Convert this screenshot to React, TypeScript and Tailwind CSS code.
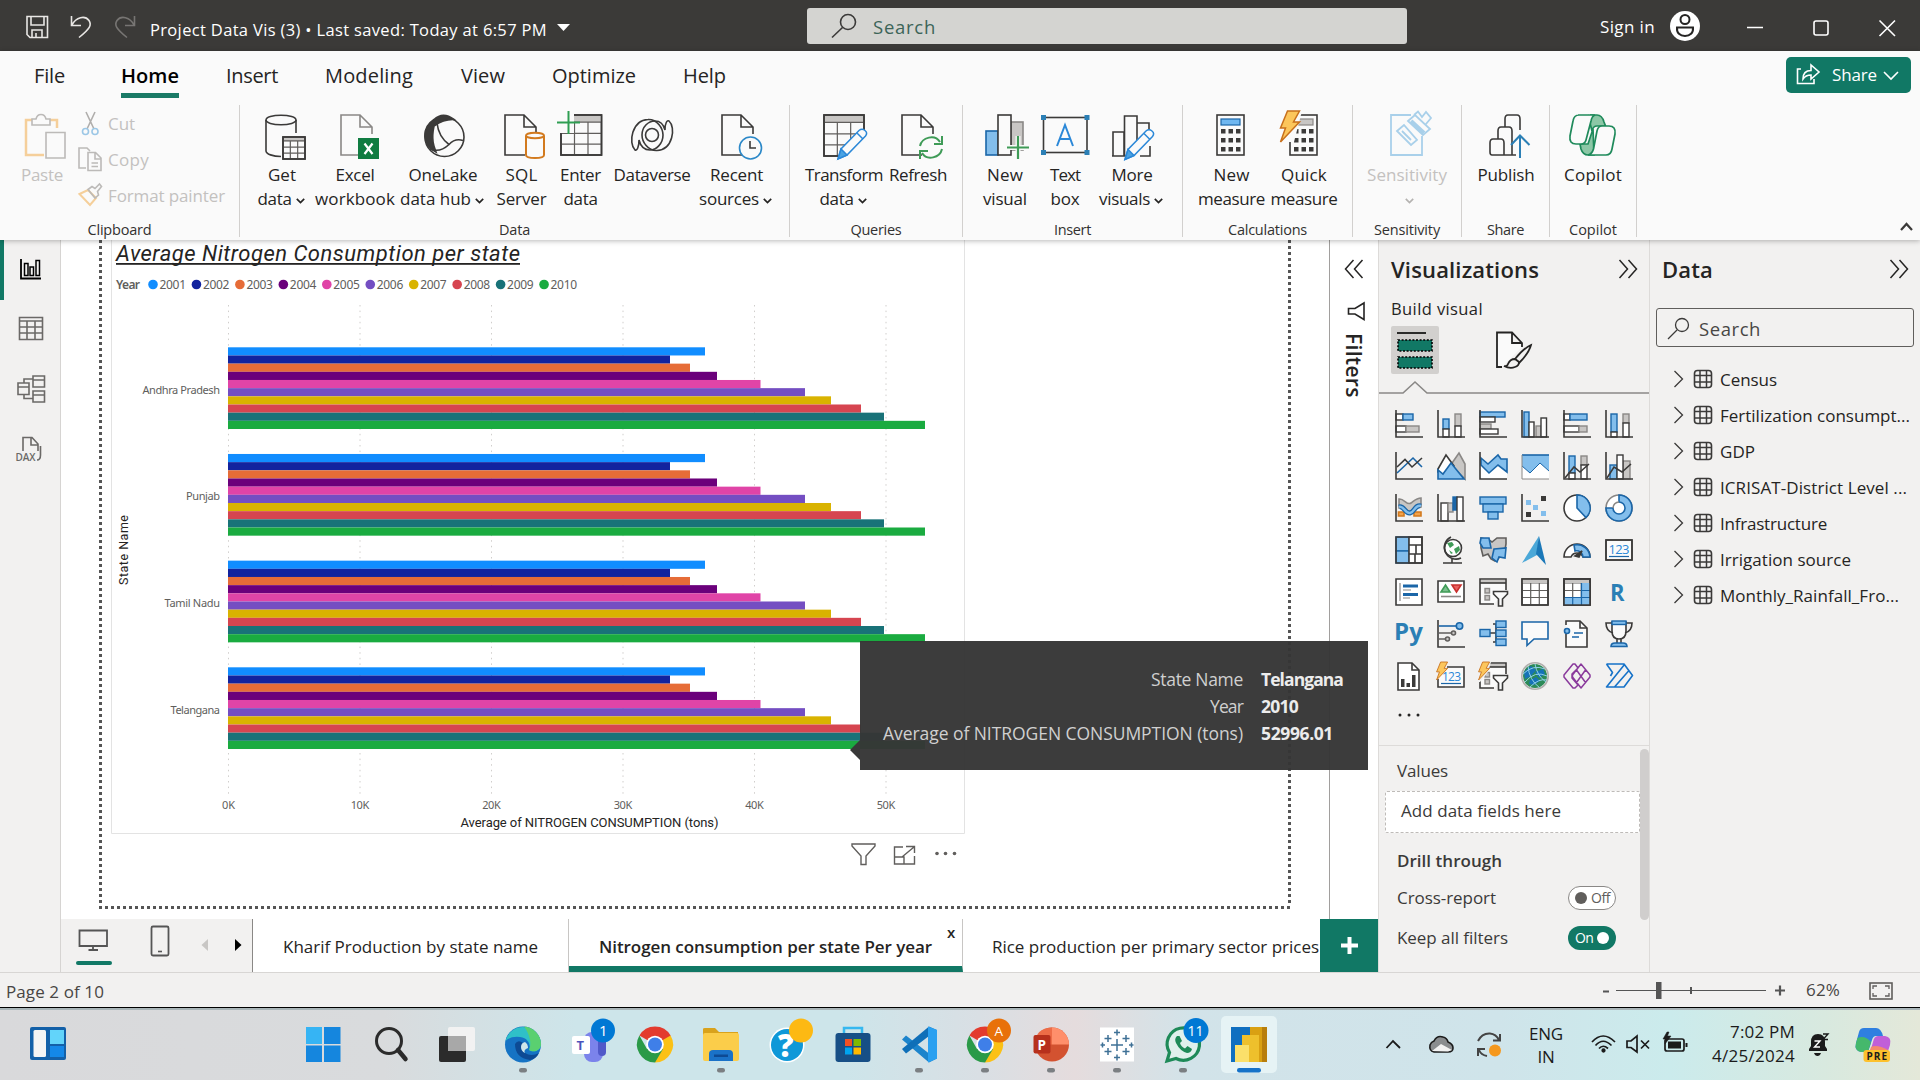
import React, { useLayoutEffect, useRef, useState } from "react";

/* Text set to a known width: the letter spacing is worked out after measuring. */
function Fit({ w, className = "", children }: { w: number; className?: string; children: string }) {
  const ref = useRef<HTMLSpanElement>(null);
  const [ls, setLs] = useState(0);
  useLayoutEffect(() => {
    if (ref.current) setLs((w - ref.current.getBoundingClientRect().width) / children.length);
  }, []);
  return (
    <span ref={ref} className={"inline-block shrink-0 whitespace-pre " + className} style={{ letterSpacing: ls }}>
      {children}
    </span>
  );
}

/* Icon whose view box is given as x, y, width, height. */
function Ic({ b, className = "", children }: { b: [number, number, number, number]; className?: string; children: React.ReactNode }) {
  return (
    <svg width={b[2]} height={b[3]} viewBox={b.join(" ")} fill="none" stroke="#3b3a39" strokeWidth="1.6" className={"block shrink-0 " + className}>
      {children}
    </svg>
  );
}

const Chev = ({ c = "#252423" }: { c?: string }) => (
  <svg width="9" height="6" viewBox="0 0 9 6" fill="none" stroke={c} strokeWidth="1.7" className="ml-[4px] mt-[3px] shrink-0">
    <path d="M.8 .8 4.5 4.5 8.2 .8" />
  </svg>
);

type Line = [string, number, boolean?];
function RBtn({ x, w, lines, off, children }: { x: number; w: number; lines: Line[]; off?: boolean; children: React.ReactNode }) {
  return (
    <div className={off ? "flex shrink-0 flex-col items-center text-[#c3c1bf]" : "flex shrink-0 flex-col items-center text-[#252423]"}>
      <Ic b={[x, 108, w, 55]}>{children}</Ic>
      {lines.map(([t, lw, ch], i) => (
        <div key={i} className={ch && t ? "flex h-6 items-center pr-[2px] text-[17px] leading-6" : "flex h-6 items-center text-[17px] leading-6"}>
          {t && <Fit w={lw}>{t}</Fit>}
          {ch && <Chev c={off ? "#b5b3b1" : undefined} />}
        </div>
      ))}
    </div>
  );
}

function Group({ className, label, lw, children }: { className: string; label: string; lw: number; children: React.ReactNode }) {
  return (
    <div className={"relative flex shrink-0 flex-col " + className}>
      <div className="flex h-[112px]">{children}</div>
      <div className="flex justify-center text-[14.5px] leading-5 text-[#323130]">
        <Fit w={lw}>{label}</Fit>
      </div>
    </div>
  );
}
const Sep = () => <div className="mt-[5px] h-[132px] w-px shrink-0 bg-[#d2d0ce]" />;

const Doc = ({ x, c = "#3b3a39" }: { x: number; c?: string }) => (
  <path d={`M${x + 20} 155H${x}V115H${x + 19}L${x + 31} 127V134M${x + 19} 115V127H${x + 31}`} stroke={c} />
);
const Grid = ({ x, y, w, h }: { x: number; y: number; w: number; h: number }) => (
  <g>
    <rect x={x} y={y} width={w} height={h} fill="#fafafa" />
    <rect x={x + 1} y={y + 1} width={w - 2} height={h * 0.15} fill="#c8c6c4" stroke="none" />
    <path strokeWidth="1.2" stroke="#605e5c" d={`M${x} ${y + h * 0.18}h${w}M${x} ${y + h * 0.46}h${w}M${x} ${y + h * 0.73}h${w}M${x + w / 3} ${y + h * 0.18}v${h * 0.82}M${x + (2 * w) / 3} ${y + h * 0.18}v${h * 0.82}`} />
    <rect x={x} y={y} width={w} height={h} />
  </g>
);
const Pencil = ({ x, y }: { x: number; y: number }) => (
  <g transform={`translate(${x} ${y})`} stroke="#2b88d8" strokeWidth="1.5">
    <path d="M0 30 3 20 21 1.500Q24-1 27 1.500Q30 4 27.500 7L9 26Z" fill="#fafafa" />
    <path d="M0 30 3 20 9 26Z" fill="#4ba3e3" />
    <path d="M19 4 25 10" />
  </g>
);
const Bolt = ({ x, y, s = 1 }: { x: number; y: number; s?: number }) => (
  <path transform={`translate(${x} ${y}) scale(${s})`} d="M8 0H20L14 11H20L1 31 6 17H1Z" fill="#fcc65c" stroke="#c8701c" strokeWidth="1.5" />
);
const Calc = ({ x, top }: { x: number; top: string }) => (
  <g>
    <rect x={x} y="115" width="27" height="40" />
    <rect x={x + 4} y="119" width="19" height="6" fill={top} stroke={top === "#c8c6c4" ? "#8a8886" : "#1b66a8"} strokeWidth="1.2" />
    {[129, 138, 147].map((y) => [4, 11.5, 19].map((d) => <rect key={y + "-" + d} x={x + d} y={y} width="4.500" height="4.500" fill="#3b3a39" stroke="none" />))}
  </g>
);

function TitleBar() {
  return (
    <div className="flex h-[51px] bg-[#3b3a38] text-white">
      <Ic b={[0, 0, 150, 51]} className="">
        <g stroke="#e8e6e4" strokeWidth="1.6">
          <path d="M27 16.500H47.500V37.500H30L27 34.500Z" />
          <path d="M31 17V25H44V17M32 37V30H42V37M36 37V33" />
          <path d="M71.500 16V25.500H81M72 25C76 17 85 15 89 20.500C92 25 90 28.500 79 37.500" />
          <path d="M134.500 16V25.500H125M134 25C130 17 121 15 117 20.500C114 25 116 28.500 127 37.500" stroke="#777573" />
        </g>
      </Ic>
      <Fit w={397} className="mt-[18px] text-[16.500px] leading-6">Project Data Vis (3) • Last saved: Today at 6:57 PM</Fit>
      <Ic b={[550, 0, 30, 51]} className="ml-[3px]">
        <path d="M557 24H570L563.500 31Z" fill="#fff" stroke="none" />
      </Ic>
      <div className="ml-[227px] mt-2 flex h-9 w-[600px] rounded-[3px] bg-[#d4d4d1]">
        <Ic b={[807, 8, 66, 36]}>
          <circle cx="848" cy="22" r="7.500" />
          <path d="M842.500 27.500 832 37.500" />
        </Ic>
        <Fit w={63} className="mt-[7px] text-[18.500px] leading-6 text-[#3c6458]">Search</Fit>
      </div>
      <Fit w={55} className="ml-[193px] mt-[15px] text-[17px] leading-6">Sign in</Fit>
      <Ic b={[1655, 0, 265, 51]}>
        <circle cx="1685" cy="26" r="15" fill="#fff" stroke="none" />
        <g stroke="#252423" strokeWidth="2">
          <circle cx="1685" cy="19.500" r="4.500" />
          <path d="M1677 27.500H1693C1693.500 33 1690 36 1685 36S1676.500 33 1677 27.500Z" />
        </g>
        <g stroke="#fff" strokeWidth="1.6">
          <path d="M1747 27.500H1763M1879.500 20.500 1895 36M1895 20.500 1879.500 36" />
          <rect x="1814" y="21" width="14" height="14" rx="2" />
        </g>
      </Ic>
    </div>
  );
}

function RibbonTabs() {
  const tabs: [string, number, string][] = [
    ["File", 31, "ml-[34px]"],
    ["Home", 58, "ml-[56px]"],
    ["Insert", 52, "ml-[47px]"],
    ["Modeling", 88, "ml-[47px]"],
    ["View", 44, "ml-[48px]"],
    ["Optimize", 84, "ml-[47px]"],
    ["Help", 43, "ml-[47px]"],
  ];
  return (
    <div className="flex h-[49px] items-start">
      {tabs.map(([t, w, m]) => (
        <div key={t} className={"flex shrink-0 flex-col text-[20px] leading-[25px] " + m}>
          <Fit w={w} className={t === "Home" ? "mt-[12px] font-semibold text-black" : "mt-[12px] text-[#252423]"}>{t}</Fit>
          {t === "Home" && <div className="mt-[5px] h-[5px] bg-[#1a7a66]" />}
        </div>
      ))}
      <div className="ml-auto mr-[9px] mt-[6px] flex h-9 w-[125px] rounded-[5px] bg-[#117865] text-white">
        <Ic b={[1786, 57, 46, 36]}>
          <g stroke="#fff">
            <path d="M1801 69H1797.500V83.500H1814V79" />
            <path d="M1803 79C1803 72.500 1806 70.500 1811 70.500V65L1819 72 1811 79V75C1807 75 1805 76 1803 79Z" />
          </g>
        </Ic>
        <Fit w={45} className="mt-[6px] text-[17px] leading-6">Share</Fit>
        <Ic b={[1877, 57, 30, 36]}>
          <path d="M1884 72 1891 79 1898 72" stroke="#fff" />
        </Ic>
      </div>
    </div>
  );
}

function Ribbon() {
  return (
    <div className="flex h-[140px]">
      <div className="flex w-[239px] shrink-0 flex-col">
        <div className="flex h-[120px]">
          <div className="ml-[18px] flex w-[50px] flex-col items-center pt-2">
            <Ic b={[18, 108, 50, 55]}>
              <path d="M33 120H26V155H44M49 120H57V128" stroke="#f5cf9a" strokeWidth="2.500" />
              <path d="M32 125V119H36Q37 114.500 41 114.500T46 119H50V125Z M46 132.500H65V158H46Z" fill="#fafafa" stroke="#bcbab8" />
            </Ic>
            <Fit w={42} className="mr-[2px] text-[17px] leading-6 text-[#c3c1bf]">Paste</Fit>
          </div>
          <div className="flex flex-col text-[17px] leading-6 text-[#c3c1bf]">
            <div className="flex h-9 items-center pt-[12px]">
              <Ic b={[68, 107, 40, 34]}>
                <path d="M86 112 94 129M95 112 87 129" stroke="#b0aeac" />
                <circle cx="85.500" cy="131.500" r="3" stroke="#9cc7e6" />
                <circle cx="95" cy="131.500" r="3" stroke="#9cc7e6" />
              </Ic>
              <Fit w={27}>Cut</Fit>
            </div>
            <div className="flex h-9 items-center pt-[12px]">
              <Ic b={[68, 143, 40, 34]}>
                <path d="M86 168H79V148H87L90 151M88 152.500H95.500L101 158V170.500H88Z M95 153V159H101M91.500 163H98M91.500 166.500H98" stroke="#bcbab8" />
              </Ic>
              <Fit w={41}>Copy</Fit>
            </div>
            <div className="flex h-9 items-center pt-[12px]">
              <Ic b={[68, 179, 40, 34]}>
                <path d="M79.500 194 88 190 96 198 90 205Z" stroke="#f5cf9a" strokeWidth="2" />
                <path d="M88 189.500 92 186.500 95 188.500 99.500 184 101.500 186.500 97.500 191.500 98.500 195 95 198Z" stroke="#bcbab8" />
              </Ic>
              <Fit w={117}>Format painter</Fit>
            </div>
          </div>
        </div>
        <div className="flex justify-center text-[14.5px] leading-5 text-[#323130]">
          <Fit w={64}>Clipboard</Fit>
        </div>
      </div>
      <Sep />
      <Group className="w-[549px] pt-2" label="Data" lw={31}>
        <div className="w-[13px]" />
        <RBtn x={253} w={58} lines={[["Get", 28], ["data", 34, true]]}>
          <path d="M266 120V151C266 154 273 156.500 281 156.500M296 120V133" />
          <ellipse cx="281" cy="120" rx="15" ry="4.800" />
          <Grid x={283} y={137} w={22} h={22} />
        </RBtn>
        <RBtn x={311} w={88} lines={[["Excel", 39], ["workbook", 80]]}>
          <Doc x={341} c="#8a8886" />
          <rect x="358" y="138" width="21" height="21" fill="#107c41" stroke="none" />
          <path d="M364.500 143.500 372.500 154M372.500 143.500 364.500 154" stroke="#fff" strokeWidth="2.200" />
        </RBtn>
        <RBtn x={399} w={88} lines={[["OneLake", 69], ["data hub", 71, true]]}>
          <circle cx="444.500" cy="137" r="19.500" />
          <path d="M434 119.500Q443 111 454 119.500Q444 119 434 126C431 140 434 147 436 152C422 145 421 128 434 119.500Z" fill="#3b3a39" />
          <path d="M437 123C438 132 443 140 449 144.500Q455 138 463 140.500M449 144.500Q440 153 430 149" />
        </RBtn>
        <RBtn x={487} w={69} lines={[["SQL", 32], ["Server", 50]]}>
          <Doc x={505} />
          <path d="M526 136V155C526 159 544 159 544 155V136" fill="#fafafa" stroke="#d27a1e" strokeWidth="2" />
          <ellipse cx="535" cy="135.500" rx="9" ry="2.800" fill="#fafafa" stroke="#d27a1e" strokeWidth="2" />
        </RBtn>
        <RBtn x={556} w={49} lines={[["Enter", 41], ["data", 34]]}>
          <Grid x={561} y={115} w={40.500} h={40} />
          <rect x="556" y="108" width="18" height="25" fill="#fafafa" stroke="none" />
          <path d="M568.500 111V134M557 122.500H580" stroke="#2f9e52" strokeWidth="2" />
        </RBtn>
        <RBtn x={605} w={94} lines={[["Dataverse", 77]]}>
          <path d="M635 150C628 143 632 120 648 119.500C657 119 663 128 663 135C663 144 656 150 650 150C643 150 640 144 639 140C639 147 637 151 635 150Z" />
          <path d="M669 121C676 127 673 150 657 150.500C648 151 642 142 642 135C642 127 648 121 655 121C661 121 664 126 665 130C665 123 667 120 669 121Z" />
          <circle cx="652" cy="135" r="6.500" />
        </RBtn>
        <RBtn x={699} w={72} lines={[["Recent", 53], ["sources", 60, true]]}>
          <Doc x={720} />
          <circle cx="748.500" cy="148" r="11" fill="#fafafa" stroke="#2b88c8" />
          <path d="M748 141V148H754" />
        </RBtn>
      </Group>
      <Sep />
      <Group className="w-[172px] pt-2" label="Queries" lw={51}>
        <div className="w-[12px]" />
        <RBtn x={802} w={84} lines={[["Transform", 78], ["data", 34, true]]}>
          <Grid x={824} y={115} w={40} h={41} />
          <path d="M841 160 868 130V160Z" fill="#fafafa" stroke="none" />
          <Pencil x={838} y={129} />
        </RBtn>
        <RBtn x={886} w={64} lines={[["Refresh", 58]]}>
          <Doc x={902} />
          <g stroke="#3f9b57" strokeWidth="2">
            <path d="M920 146C922 137 935 134 940 142M942 136V144H934M942 149C940 158 927 161 922 153M920 159V151H928" />
          </g>
        </RBtn>
      </Group>
      <Sep />
      <Group className="w-[219px] pt-2" label="Insert" lw={37}>
        <div className="w-[14px]" />
        <RBtn x={977} w={56} lines={[["New", 36], ["visual", 44]]}>
          <rect x="986" y="131" width="12" height="24" fill="#83beec" stroke="#1b66a8" />
          <rect x="1011" y="122" width="12" height="28" fill="#c8c6c4" stroke="#8a8886" />
          <rect x="998" y="115" width="13" height="40" fill="#fafafa" />
          <path d="M1018 136V159M1007 147.500H1029" stroke="#fafafa" strokeWidth="5" />
          <path d="M1018 136V159M1007 147.500H1029" stroke="#3f9b57" strokeWidth="2.200" />
        </RBtn>
        <RBtn x={1033} w={64} lines={[["Text", 30], ["box", 29]]}>
          <rect x="1043.500" y="117.500" width="43.500" height="35" />
          {[1041, 1084.5].map((x) => [115, 150].map((y) => <rect key={x + y} x={x} y={y} width="5" height="5" fill="#2b7fb5" stroke="none" />))}
          <path d="M1057 146 1065 125 1073 146M1059.500 139H1070.500" stroke="#2b88d8" strokeWidth="2" />
        </RBtn>
        <RBtn x={1097} w={70} lines={[["More", 41], ["visuals", 51, true]]}>
          <path d="M1113 156V132H1124V156M1124.500 156V116H1137V156M1137 123H1149V131M1150 146V156H1112" />
          <path d="M1126 158 1152 128V158Z" fill="#fafafa" stroke="none" />
          <path d="M1150 146V156H1140" />
          <Pencil x={1125} y={129.5} />
        </RBtn>
      </Group>
      <Sep />
      <Group className="w-[169px] pt-2" label="Calculations" lw={79}>
        <div className="w-[13px]" />
        <RBtn x={1196} w={71} lines={[["New", 36], ["measure", 67]]}>
          <Calc x={1217} top="#6fb7f0" />
        </RBtn>
        <RBtn x={1267} w={74} lines={[["Quick", 46], ["measure", 67]]}>
          <Calc x={1290} top="#c8c6c4" />
          <path d="M1280 111H1302L1294 142H1280Z" fill="#fafafa" stroke="none" />
          <Bolt x={1279.5} y={111} />
        </RBtn>
      </Group>
      <Sep />
      <Group className="w-[108px] pt-2" label="Sensitivity" lw={66}>
        <div className="w-[12px]" />
        <RBtn x={1365} w={84} off lines={[["Sensitivity", 80], ["", 0, true]]}>
          <g stroke="#a9d0ea" strokeWidth="1.8">
            <path d="M1411 115H1391V155H1422V136" />
            <path d="M1397 131 1404 125 1417 140 1411 145Z M1402 131 1411 140M1408 121 1415 115 1430 129 1423 135ZM1414 115 1418 111.500 1422 117 1426 112 1431 118 1426 124" />
            <path d="M1411 121 1424 133" strokeWidth="4" />
          </g>
        </RBtn>
      </Group>
      <Sep />
      <Group className="w-[87px] pt-2" label="Share" lw={37}>
        <div className="w-[8px]" />
        <RBtn x={1470} w={72} lines={[["Publish", 57]]}>
          <path d="M1516 155H1492Q1490 155 1490 152V143Q1490 139 1493 139H1501Q1504 139 1504 143V155M1498 139V131Q1498 127 1501 127H1509Q1512 127 1512 131V155M1505 127V119Q1505 115 1508 115H1517Q1520 115 1520 119V130" />
          <path d="M1520 158V136M1511 145 1520 135.500 1529.500 145" stroke="#2b7fb5" strokeWidth="2" />
        </RBtn>
      </Group>
      <Sep />
      <Group className="w-[86px] pt-2" label="Copilot" lw={48}>
        <div className="w-[9px]" />
        <RBtn x={1559} w={68} lines={[["Copilot", 58]]}>
          <g stroke="#1f8a5b" strokeWidth="1.700">
            <path d="M1590 115H1597Q1602 115 1604 122L1605.500 126H1597Q1593 126 1592 131L1588 115M1580 144H1588L1593 129 1594 155H1588Q1583 155 1581 149Z" fill="#8cc7a6" />
            <path d="M1578 115H1595Q1592 116 1591 121L1586 140Q1585 144 1581 144H1576Q1569 144 1570 136L1573 121Q1574 115 1579 115Z" fill="#fafafa" />
            <path d="M1607 155H1588Q1592 154 1593.500 149L1597 131Q1598 126 1602 126H1609Q1616 126 1615 134L1612 149Q1611 155 1606 155Z" fill="#fafafa" />
          </g>
        </RBtn>
      </Group>
      <Sep />
      <Ic b={[1637, 100, 283, 140]}>
        <path d="M1901 230 1906.500 224 1912 230" strokeWidth="2.200" />
      </Ic>
    </div>
  );
}

function Rail() {
  return (
    <div className="w-[61px] shrink-0 border-r border-[#d6d4d2] bg-[#f2f1f0]">
      <Ic b={[0, 240, 60, 240]}>
        <rect x="0" y="240" width="4" height="60" fill="#117865" stroke="none" />
        <g stroke="#000" strokeWidth="1.8">
          <path d="M21 259V278.500H41" />
          <path d="M24.500 275.500V263.500H28V275.500ZM30 275.500V267H33.500V275.500ZM36 275.500V260.500H39.500V275.500Z" strokeWidth="1.500" />
        </g>
        <g stroke="#6b6967">
          <path d="M19.500 317.500H42.500V339.500H19.500ZM19.500 321H42.500M19.500 327H42.500M19.500 333H42.500M27 321V339M35 321V339" />
          <path d="M33 376H44.500V387H33ZM33 380H44M33 391H44.500V402H33ZM33 395H44M18 383H29V394.500H18ZM18 387H29M24 383V379H33M24 395V398.500H33" />
          <path d="M23 451V437.500H32L38 444V451M31 438V445H38M40.500 446V455Q40.500 460 37 460" />
        </g>
        <text x="15.500" y="461" textLength="20" fontSize="10" fontWeight="600" fill="#6b6967" stroke="none" fontFamily="Open Sans, sans-serif">DAX</text>
      </Ic>
    </div>
  );
}

const years: [string, string, number][] = [
  ["2001", "#118dff", 705],
  ["2002", "#12239e", 670],
  ["2003", "#e66c37", 690],
  ["2004", "#6b007b", 717],
  ["2005", "#e044a7", 760.5],
  ["2006", "#744ec2", 805],
  ["2007", "#d9b300", 831],
  ["2008", "#d64550", 861],
  ["2009", "#197278", 884],
  ["2010", "#1aab40", 925],
];
const states: [string, number][] = [["Andhra Pradesh", 77.5], ["Punjab", 34], ["Tamil Nadu", 55.5], ["Telangana", 49.5]];
const dinFont = "Roboto, sans-serif";

function Chart() {
  return (
    <svg width="854" height="594" viewBox="111 240 854 594" className="ml-[9px] block shrink-0" fontFamily="Noto Sans, Open Sans, sans-serif">
      <path d="M111.500 240V833.500H964.500V240" fill="none" stroke="#e3e3e3" />
      <text x="116" y="260.700" fontSize="22" fontStyle="italic" fontFamily={dinFont} fill="#252423" textLength="404">Average Nitrogen Consumption per state</text>
      <rect x="116" y="263" width="404" height="1.800" fill="#252423" />
      <text x="116" y="289" fontSize="12" fontWeight="600" fill="#605e5c" textLength="24">Year</text>
      {years.map(([y, c], i) => (
        <g key={y}>
          <circle cx={153 + 43.45 * i} cy="284.500" r="4.800" fill={c} />
          <text x={159.5 + 43.45 * i} y="289" fontSize="12" fill="#605e5c" textLength="26.500">{y}</text>
        </g>
      ))}
      {[0, 1, 2, 3, 4, 5].map((k) => (
        <g key={k}>
          <path d={`M${228.5 + 131.5 * k} 305V797`} stroke="#d0cecc" strokeDasharray="1.500 4.100" />
          <text x={228.5 + 131.5 * k} y="809" fontSize="11" textAnchor="middle" fill="#605e5c" textLength={k ? 18.5 : 13}>{k * 10 + "K"}</text>
        </g>
      ))}
      {states.map(([s, w], g) => (
        <g key={s}>
          <text x={220 - w} y={393.7 + 106.67 * g} fontSize="11" fill="#605e5c" textLength={w}>{s}</text>
          {years.map(([y, c, end], i) => (
            <rect key={y} x="228" y={347.3 + 106.67 * g + 8.17 * i} width={end - 228} height="8.170" fill={c} />
          ))}
        </g>
      ))}
      <text x="460.500" y="826.500" fontSize="13" fontFamily={dinFont} fill="#252423" textLength="258">Average of NITROGEN CONSUMPTION (tons)</text>
      <text transform="translate(128 585) rotate(-90)" fontSize="12.500" fontFamily={dinFont} fill="#252423" textLength="70">State Name</text>
    </svg>
  );
}

const dotsV = "w-[3px] shrink-0 bg-[repeating-linear-gradient(180deg,#555_0_3px,transparent_3px_6px)]";

function Canvas() {
  return (
    <div className="relative flex h-[679px] w-[1268px] shrink-0 flex-col bg-white pl-[38px]">
      <div className="flex h-[666px] w-[1192px]">
        <div className={dotsV} />
        <div className="flex-1">
          <Chart />
          <Ic b={[840, 834, 130, 40]} className="ml-[738px]">
            <g stroke="#605e5c" strokeWidth="1.400">
              <path d="M852 844H875V846L866 856V864.500H861V856L852 846Z" />
              <path d="M903 847H894.500V864H914.500V856M894.500 857H904V864M902 857 914 847M906 846.500H914.500V853" />
            </g>
            <g fill="#605e5c" stroke="none">
              <circle cx="937" cy="853.500" r="1.800" /><circle cx="945.500" cy="853.500" r="1.800" /><circle cx="954.500" cy="853.500" r="1.800" />
            </g>
          </Ic>
        </div>
        <div className={dotsV} />
      </div>
      <div className="h-[3px] w-[1192px] bg-[repeating-linear-gradient(90deg,#555_0_3px,transparent_3px_6px)]" />
      <div className="absolute left-[789px] top-[401px] z-20 flex">
        <svg width="10" height="129" className="block shrink-0" viewBox="0 0 10 129"><path d="M10 99 0 109 10 119Z" fill="#393939" /></svg>
        <div className="grid h-[129px] w-[508px] grid-cols-[383px_1fr] content-start gap-x-[18px] bg-[#363636]/[0.97] pt-[25px] text-[17.500px] leading-[27px] text-[#d0d0d0]">
          <div className="text-right"><Fit w={92}>State Name</Fit></div>
          <div className="font-bold text-[#ececec]"><Fit w={82}>Telangana</Fit></div>
          <div className="text-right"><Fit w={33}>Year</Fit></div>
          <div className="font-bold text-[#ececec]"><Fit w={37}>2010</Fit></div>
          <div className="text-right"><Fit w={360}>Average of NITROGEN CONSUMPTION (tons)</Fit></div>
          <div className="font-bold text-[#ececec]"><Fit w={72}>52996.01</Fit></div>
        </div>
      </div>
    </div>
  );
}

function PageTabs() {
  return (
    <div className="flex h-[53px] w-[1317px] bg-white text-[17px] leading-6 text-[#252423]">
      <div className="w-[192px] shrink-0 border-r border-[#8a8886] bg-[#f2f1f0]">
        <Ic b={[61, 919, 191, 53]}>
          <path d="M79.500 930.500H107V946H79.500ZM93 946V949.500M88.500 950H98" stroke="#555" strokeWidth="1.800" />
          <rect x="76" y="961" width="36" height="4" rx="2" fill="#117865" stroke="none" />
          <rect x="151.500" y="926.500" width="17" height="29" rx="1.500" stroke="#555" strokeWidth="1.800" />
          <path d="M158 951.500H162" stroke="#555" />
          <path d="M208 939V951L201.500 945Z" fill="#c8c6c4" stroke="none" />
          <path d="M235 939V951L241.500 945Z" fill="#000" stroke="none" />
        </Ic>
      </div>
      <div className="w-[316px] shrink-0 border-r border-[#c8c6c4] pl-[30px] pt-[16px]"><Fit w={255}>Kharif Production by state name</Fit></div>
      <div className="flex w-[394px] shrink-0 border-b-[6px] border-r border-b-[#117865] border-r-[#c8c6c4] pl-[30px]">
        <Fit w={333} className="mt-[16px] font-semibold">Nitrogen consumption per state Per year</Fit>
        <Fit w={9} className="ml-[15px] mt-[1px] text-[15px] font-semibold">x</Fit>
      </div>
      <div className="w-[357px] shrink-0 overflow-hidden pl-[29px] pt-[16px]"><Fit w={327}>Rice production per primary sector prices</Fit></div>
      <div className="flex w-[58px] shrink-0 items-center justify-center bg-[#117865]">
        <svg width="17" height="17" viewBox="0 0 17 17" stroke="#fff" strokeWidth="4"><path d="M8.500 0V17M0 8.500H17" /></svg>
      </div>
    </div>
  );
}

const D = "#3b3a39", B = "#1b66a8", F = "#83beec", G = "#c8c6c4", W = "#fff";
const Axis = () => <path d="M1 0V27H28" />;
const R = (x: number, y: number, w: number, h: number, fill = W, stroke = D) => <rect x={x} y={y} width={w} height={h} fill={fill} stroke={stroke} strokeWidth="1.400" />;
const TableBase = () => (
  <>
    {R(1, 1, 26, 26)}
    <path d="M1 5H27M1 12.500H27M1 19.500H27M9.700 5V27M18.300 5V27" stroke="#605e5c" strokeWidth="1.200" />
    <rect x="1.500" y="1.500" width="25" height="3.500" fill={G} stroke="none" />
    <path d="M1 1H27V27H1Z" />
  </>
);
const SlicerBase = () => (
  <>
    <path d="M15 26H1V1H27V12" fill="#fafafa" />
    <path d="M2 2H26V5H2Z" fill={G} stroke="none" />
    <path d="M1 5H27" />
    {R(6, 10.5, 4.5, 4.5, G, "#8a8886")}
    {R(6, 17.5, 4.5, 4.5, G, "#8a8886")}
    <path d="M14.500 13.500H28.500V16L23.500 21V28H19.500V21L14.500 16Z" fill="#fafafa" />
  </>
);

const vizIcons: React.ReactNode[] = [
  <>{R(1, 4, 7, 6)}{R(8, 4, 10, 6, F, B)}{R(1, 16, 10, 6)}{R(11, 16, 13, 6, G, "#8a8886")}<Axis /></>,
  <>{R(6, 9, 6, 10, F, B)}{R(6, 19, 6, 8)}{R(18, 4, 6, 12, G, "#8a8886")}{R(18, 16, 6, 11)}<Axis /></>,
  <>{R(1, 2, 25, 5, F, B)}{R(1, 7, 15, 5)}{R(1, 14, 11, 5, G, "#8a8886")}{R(1, 19, 18, 5)}<Axis /></>,
  <>{R(3, 2, 5, 25, F, B)}{R(8, 12, 5, 15)}{R(15, 16, 5, 11, G, "#8a8886")}{R(20, 8, 5.5, 19)}<Axis /></>,
  <>{R(1, 4, 6, 6)}{R(7, 4, 17, 6, F, B)}{R(1, 16, 15, 6)}{R(16, 16, 8, 6, G, "#8a8886")}<Axis /></>,
  <>{R(6, 4, 6, 18, F, B)}{R(6, 22, 6, 5)}{R(18, 4, 6, 9, G, "#8a8886")}{R(18, 13, 6, 14)}<Axis /></>,
  <><path d="M2 21 18 6 27 15" stroke={B} /><path d="M2 15 10 7.500 17 15 27 6" /><Axis /></>,
  <><path d="M13 14 22 1 28 12V27L20 19Z" fill={G} stroke="#8a8886" /><path d="M1 17 9 3 17 14 8 25 1 20Z" fill={W} /><path d="M1 27V18L6 22 14 11 27 27Z" fill={F} stroke={B} /></>,
  <><path d="M1 12 10 21 19 13 28 20V27H1Z" fill={W} stroke="none" /><path d="M2 6 9 12 19 3 22 7H28V20L19 13 10 21 2 13Z" fill={F} stroke={B} /><Axis /></>,
  <><path d="M1 3H28V27H1Z" fill={W} stroke="none" /><path d="M1 3H28V19L19 11 9 21 1 14Z" fill={F} stroke="none" /><path d="M1 3H28" stroke={B} /><path d="M1 14 9 21 19 11 28 19" stroke={B} strokeWidth="1" /><path d="M1 3V27H28" stroke="#8a8886" strokeWidth="1" /></>,
  <>{R(6, 4, 6, 17, F, B)}{R(6, 21, 6, 6)}{R(18, 4, 6, 9, G, "#8a8886")}{R(18, 13, 6, 14)}<path d="M2 26 11 15 17 20 26 12" /><Axis /></>,
  <>{R(18, 9, 7, 18, G, "#8a8886")}{R(5, 13, 7, 14, F, B)}{R(12, 3, 6, 24)}<path d="M2 26 9 15 17 20 26 12" /><Axis /></>,
  <><path d="M4 5C9 4 12 12 16 9S22 4 26 4V13C20 13 17 20 12 16S8 14 4 14Z" fill={G} stroke="#8a8886" /><path d="M3.500 18H9V22H3.500ZM19 18H26V22H19ZM4 13H8M21 13H26" fill="#f2a24a" stroke="#d27a1e" /><path d="M4 13C9 11 10 20 15 19S20 10 26 12" stroke={B} strokeWidth="5" /><path d="M4 13C9 11 10 20 15 19S20 10 26 12" stroke={F} strokeWidth="2.500" /><Axis /></>,
  <>{R(4, 9, 7, 18)}{R(11, 9, 5, 9, G, "#8a8886")}{R(16, 3, 4, 13, "#1b66a8", B)}{R(20, 3, 6, 24)}<Axis /></>,
  <>{R(1, 3, 26, 7, F, B)}{R(4, 10, 20, 8, F, B)}{R(9, 18, 10, 7, F, B)}</>,
  <><g stroke="none"><rect x="20" y="2" width="5" height="5" fill={D} /><rect x="5" y="18" width="5" height="5" fill={D} /><rect x="5" y="6" width="5" height="5" fill={F} /><rect x="12" y="11" width="5" height="5" fill={F} /><rect x="20" y="17" width="5" height="5" fill={F} /></g><Axis /></>,
  <><circle cx="14" cy="14" r="13" fill={W} /><path d="M14 1A13 13 0 0 1 23 23.500L14 14Z" fill={F} stroke={B} /></>,
  <><circle cx="14" cy="14" r="13" fill={W} stroke="#8a8886" /><path d="M14 1A13 13 0 1 1 1 14H8A6 6 0 1 0 14 8Z" fill={F} stroke={B} /><path d="M8 14A6 6 0 0 1 14 8" stroke="#8a8886" /></>,
  <>{R(1, 1, 13, 14, F, B)}{R(1, 15, 13, 12, F, B)}<path d="M14 1H27V27H14ZM14 9H27M21 9V18M14 18H27M20 18V27" fill={W} /><path d="M1 1H27V27H1Z" stroke={D} /></>,
  <><circle cx="16" cy="12" r="8.500" fill={W} /><path d="M10 7 15 6 17 9 13 12ZM17 13 22 10 23 14 19 18ZM12 14 16 17 14 18Z" fill="#3f9b57" stroke="none" /><path d="M14 1A11.500 11.500 0 1 0 24 22M15 23V27M6 27H25" /></>,
  <><path d="M2 2 10 4 13 6 18 2H27V8L26 14 19 23 16 25 12 23 9 18 4 20 2 12Z" fill={G} stroke="#605e5c" /><path d="M2 2H10L12 12H4L1 7Z" fill={F} stroke={B} /><path d="M15 13 27 12 26 22 20 21 18 26 13 22Z" fill={F} stroke={B} /></>,
  <g stroke="none"><path d="M18 0 1 27 16 19Z" fill="#4ba8d8" /><path d="M18 0 25 29 15 18Z" fill="#1b78b8" /></g>,
  <><path d="M1 21A13 13 0 0 1 27 21H20A6.500 6.500 0 0 0 8 21Z" fill={W} /><path d="M11 9A13 13 0 0 1 27 21H20A6.500 6.500 0 0 0 12 15Z" fill={F} stroke={B} /><path d="M12 20 19 15 16 21Z" fill={D} /></>,
  <>{R(1, 4, 26, 20, "#fafafa")}<text x="3.500" y="17.500" textLength="21" fontSize="13" fill="#2b88d8" stroke="none">123</text><path d="M4 20.500H24" stroke={B} strokeWidth="1.200" /><path d="M1 4H27V24H1Z" /></>,
  <><path d="M1 1H27V27H1Z" fill={W} /><path d="M5 5V23M8 12H16M8 20H15" stroke="#8a8886" strokeWidth="1.200" /><path d="M8 8H23M8 16.500H23" stroke={B} strokeWidth="3" /></>,
  <><path d="M1 3H27V24H1Z" fill={W} /><path d="M4 14 8.500 7 13 14Z" fill="#7cc08e" stroke="#3f9b57" /><path d="M15 7H24L19.500 14Z" fill="#e8605e" stroke="#c8302e" /><path d="M4 18.500H24" stroke="#8a8886" /></>,
  <SlicerBase />,
  <TableBase />,
  <><TableBase /><path d="M18.500 5H27V27H1V19.500H18.500Z" fill={F} stroke="none" /><path d="M1 19.500H27M9.700 19V27M18.500 5V27M18.500 12.500H27" stroke={B} strokeWidth="1.200" /><path d="M1 1H27V27H1Z" /></>,
  <text x="5" y="22.500" fontSize="24" fontWeight="700" textLength="14.500" lengthAdjust="spacingAndGlyphs" fill="#2b7fb5" stroke="none">R</text>,
  <text x="-1" y="20" fontSize="24" fontWeight="700" textLength="29" fill="#2b7fb5" stroke="none">Py</text>,
  <><path d="M2 6H20" stroke={B} /><circle cx="22.500" cy="6" r="3.200" fill={F} stroke={B} /><path d="M2 13H14M2 19H9" stroke="#605e5c" /><circle cx="16.500" cy="13" r="2" stroke="#605e5c" fill={G} /><circle cx="10.500" cy="19" r="2" stroke="#605e5c" fill={G} /><Axis /></>,
  <><path d="M10 13H17V4M17 13V22M14 4H18M14 13H18M14 22H18" />{R(1, 9.5, 10, 7, F, B)}{R(17, 1, 10, 6.5, F, B)}{R(17, 10, 10, 6.5, F, B)}{R(17, 19, 10, 6.5, F, B)}</>,
  <path d="M1 2H27V19H13L6 25.500V19H1Z" fill="#fafafa" stroke={B} />,
  <><path d="M3 5V1H17L24 8V27H3V14" fill="#fafafa" /><path d="M17 1V8H24" /><path d="M11 13H20M9 17H16" stroke={B} strokeWidth="1.300" /><circle cx="4" cy="11" r="2.500" fill={F} stroke={B} /></>,
  <><path d="M7 2H21V11Q21 19 14 19T7 11Z" fill="#fafafa" /><path d="M7 3H1Q1 11 8 13M21 3H27Q27 11 20 13M12 19V23M16 19V23" />{R(7, 1, 14, 3.5, F, B)}<path d="M6 26.500Q6 23 10 23H18Q22 23 22 26.500Z" fill={F} stroke={B} /></>,
  <><path d="M3 1H17L24 8V28H3Z" fill={W} /><path d="M17 1V8H24" /><g fill={D} stroke="none"><rect x="6" y="17" width="3.500" height="8" /><rect x="11.500" y="21" width="3.500" height="4" /><rect x="17" y="13" width="3.500" height="12" /></g></>,
  <><path d="M10 5H27V25H1V17" fill="#fafafa" /><text x="5" y="19" textLength="19" fontSize="12" fill="#2b88d8" stroke="none">123</text><path d="M4 21.500H24" stroke={B} strokeWidth="1.200" /><Bolt x={-1} y={0} s={0.58} /></>,
  <><SlicerBase /><path d="M-1 0H12L9 10 1 20H-1Z" fill="#f2f1f0" stroke="none" /><Bolt x={-1} y={0} s={0.58} /></>,
  <><circle cx="14" cy="14" r="12" fill="#2d8a57" stroke="none" /><path d="M3 10 10 4 15 8 10 14 4 17ZM14 10 22 7 24 12 18 16ZM9 18 15 15 19 19 13 23 8 22Z" fill="#1672b8" stroke="none" /><path d="M2 12Q12 2 24 7M4 20Q14 8 26 14M9 25Q18 16 26 18M7 4Q8 18 19 26M14 2Q16 14 25 20" stroke="#8fd0e8" strokeWidth="1" /><circle cx="14" cy="14" r="13.200" stroke="#b0aeac" /></>,
  <g stroke="#8a3a9c" strokeWidth="1.500" strokeLinejoin="round"><path d="M15 6 12 2H10L1 13V15L10 26H12L15 23 9 16V12ZM18 2 27 13V15L18 26 9.500 15V13ZM13.500 8 22.500 20.500M22.500 8 13.500 20.500" /></g>,
  <path d="M1.500 2H19L27.500 13.500 19 25H1.500L19.500 2.500M1.500 2 7.500 10.500 5.500 14M9.500 25 24 8.500" fill="none" stroke="#1672c8" strokeLinejoin="round" />,
];

const DblChev = ({ left }: { left?: boolean }) => (
  <svg width="20" height="20" viewBox="0 0 20 20" fill="none" stroke="#252423" strokeWidth="1.500" className="block shrink-0">
    <path d={left ? "M9.500 1 1.500 10 9.500 19M18.500 1 10.500 10 18.500 19" : "M1.500 1 9.500 10 1.500 19M10.500 1 18.500 10 10.500 19"} />
  </svg>
);

function Visualizations() {
  return (
    <div className="flex w-[272px] shrink-0 flex-col border-x border-[#dddbd9] bg-[#f2f1f0] text-[#252423]">
      <div className="flex h-[59px] items-start pl-[12px]">
        <Fit w={148} className="mt-[14px] text-[22px] font-semibold leading-[30px]">Visualizations</Fit>
        <div className="ml-auto mr-[11px] mt-[19px]"><DblChev /></div>
      </div>
      <Fit w={92} className="ml-[12px] self-start text-[16.500px] font-medium leading-5">Build visual</Fit>
      <Ic b={[1379, 319, 270, 78]}>
        <rect x="1391" y="326" width="48" height="48" rx="2" fill="#d2d0ce" stroke="none" />
        <path d="M1397 333H1426" stroke="#000" />
        <rect x="1398" y="340" width="34" height="11" fill="#117865" stroke="#000" strokeDasharray="2 1.600" />
        <rect x="1398" y="357" width="34" height="11" fill="#117865" stroke="#000" strokeDasharray="2 1.600" />
        <g stroke="#252423" strokeWidth="1.800">
          <path d="M1502 367H1497V332.500H1512L1522 343V347M1512 333V343H1522" fill="#fafafa" />
          <path d="M1531 345Q1524 348 1515 359L1519 363Q1529 353 1531 345Z" fill="#f2f1f0" />
          <path d="M1515 359Q1510 359 1508 364Q1507 367 1504 366Q1510 369 1515 367Q1519 366 1519 362Z" fill="#f2f1f0" />
        </g>
        <path d="M1379 393H1403L1415 382 1427 393H1649" stroke="#8a8886" />
      </Ic>
      <div className="ml-[16px] mt-[13px] grid grid-cols-[repeat(6,28px)] gap-[14px]">
        {vizIcons.map((n, i) => (
          <svg key={i} width="28" height="28" viewBox="0 0 28 28" fill="none" stroke={D} strokeWidth="1.600" className="block overflow-visible" fontFamily="Open Sans, sans-serif">{n}</svg>
        ))}
      </div>
      <Ic b={[1379, 690, 270, 55]}>
        <g fill="#252423" stroke="none"><circle cx="1400" cy="715" r="1.500" /><circle cx="1409" cy="715" r="1.500" /><circle cx="1418" cy="715" r="1.500" /></g>
      </Ic>
      <div className="flex flex-1 border-t border-[#dddbd9]">
        <div className="w-[261px] pl-[6px] pt-[13px] text-[17px] leading-6 text-[#3b3a39]">
          <div className="h-6 pl-[12px]"><Fit w={51}>Values</Fit></div>
          <div className="mt-[8px] flex h-[42px] w-[255px] items-start rounded-[2px] border border-dashed border-[#bebbb8] bg-white pl-[15px] pt-[7px]"><Fit w={160}>Add data fields here</Fit></div>
          <div className="mt-[16px] h-6 pl-[12px] font-semibold"><Fit w={105}>Drill through</Fit></div>
          <div className="mt-[13px] flex h-6 pl-[12px]">
            <Fit w={99}>Cross-report</Fit>
            <div className="ml-auto mr-[24px] flex h-6 w-12 items-center rounded-full border border-[#8a8886] bg-white pl-[6px] text-[14px] text-[#605e5c]">
              <div className="mr-[4px] h-3 w-3 rounded-full bg-[#605e5c]" /><Fit w={19}>Off</Fit>
            </div>
          </div>
          <div className="mt-[16px] flex h-6 pl-[12px]">
            <Fit w={111}>Keep all filters</Fit>
            <div className="ml-auto mr-[24px] flex h-6 w-12 items-center rounded-full bg-[#117865] pl-[7px] text-[14px] text-white">
              <Fit w={18}>On</Fit><div className="ml-[4px] h-3 w-3 rounded-full bg-white" />
            </div>
          </div>
        </div>
        <div className="mt-[3px] h-[171px] w-[9px] rounded-full bg-[#d0cecd]" />
      </div>
    </div>
  );
}

function DataPane() {
  const rows: [string, number][] = [
    ["Census", 57], ["Fertilization consumpt...", 190], ["GDP", 35], ["ICRISAT-District Level ...", 187],
    ["Infrastructure", 107], ["Irrigation source", 131], ["Monthly_Rainfall_Fro...", 179],
  ];
  return (
    <div className="flex flex-1 flex-col bg-[#f2f1f0] text-[#252423]">
      <div className="flex h-[68px] items-start pl-[12px]">
        <Fit w={51} className="mt-[14px] text-[22px] font-semibold leading-[30px]">Data</Fit>
        <div className="ml-auto mr-[11px] mt-[19px]"><DblChev /></div>
      </div>
      <div className="ml-[6px] flex h-[39px] w-[258px] items-center rounded-[3px] border border-[#605e5c]">
        <Ic b={[1657, 309, 42, 36]}>
          <circle cx="1682" cy="324" r="6.500" strokeWidth="1.300" />
          <path d="M1677 329 1668 338" strokeWidth="1.300" />
        </Ic>
        <Fit w={62} className="mt-[2px] text-[18.500px] leading-6 text-[#484644]">Search</Fit>
      </div>
      <div className="mt-[14px]">
        {rows.map(([t, w]) => (
          <div key={t} className="flex h-9 items-center">
            <Ic b={[0, 0, 70, 36]}>
              <path d="M24.500 10 32.500 18 24.500 26" strokeWidth="1.300" />
              <rect x="44.500" y="9.500" width="17" height="17" rx="3" />
              <path d="M50 9V27M56.500 9V27M44 14.500H62M44 21H62" strokeWidth="1.500" />
            </Ic>
            <Fit w={w} className="mt-px text-[17px] leading-6">{t}</Fit>
          </div>
        ))}
      </div>
    </div>
  );
}

const Win = () => (
  <g stroke="none" fill="#1586de">
    <path d="M16 19H32V36H16ZM34 19H50.500V36H34ZM16 37.500H32V54H16ZM34 37.500H50.500V54H34Z" />
    <path d="M16 19H32V36H16Z" fill="#36b4f4" />
  </g>
);
const Chrome = () => (
  <g stroke="none">
    <path d="M33 36.500 17.400 27.500A18 18 0 0 1 48.600 27.500L48 29Z" fill="#e33b2e" />
    <path d="M33 36.500 48.600 27.500A18 18 0 0 1 33 54.500Z" fill="#fbc116" />
    <path d="M33 36.500 25 41 17.400 27.500A18 18 0 0 0 33 54.500L41 41Z" fill="#2a9a48" />
    <circle cx="33" cy="36.500" r="8.800" fill="#fff" />
    <circle cx="33" cy="36.500" r="7" fill="#3f7fe8" />
  </g>
);
const tf = "Open Sans, sans-serif";
const apps: [React.ReactNode, number][] = [
  [<Win />, 0],
  [<><circle cx="31" cy="33" r="12.500" stroke="#2b2b2b" strokeWidth="3" /><path d="M40 42 47.500 51" stroke="#2b2b2b" strokeWidth="4.500" strokeLinecap="round" /></>, 0],
  [<g stroke="none"><rect x="15" y="28" width="27" height="26" rx="2" fill="#2b2b2b" /><rect x="24" y="19" width="27" height="24" rx="2" fill="#f2f2f2" /><path d="M24 28H42V43H24Z" fill="#a8a8a8" /></g>, 0],
  [<g stroke="none"><circle cx="33" cy="36.500" r="18" fill="#1673c4" /><path d="M15.500 33A18 18 0 0 1 51 36C51 43 43 45 39 42C41 38 39 30 30 29Q20 28 15.500 33Z" fill="#2fc0c8" /><path d="M34 18.500A18 18 0 0 1 51 36C51 43 43 45 39 42C42 37 40 26 34 18.500Z" fill="#5ad070" /><path d="M25 36Q25 50 40 52Q46 51 49 45Q41 49 35 45Q30 41 33 35Q28 31 25 36Z" fill="#0d4a94" /><path d="M35 34Q38 36 38 40Q33 42 35 45Q31 43 31 39Q31 35 35 34Z" fill="#cfe6ea" /></g>, 1],
  [<g stroke="none"><rect x="28" y="24" width="19" height="30" rx="8" fill="#7b83eb" /><rect x="42" y="28" width="8" height="20" rx="4" fill="#5059c9" /><rect x="16" y="28" width="18" height="18" rx="2" fill="#fff" /><text x="20.500" y="42" fontSize="13" fontWeight="700" fill="#4b53bc" fontFamily={tf}>T</text><circle cx="47" cy="22.500" r="12" fill="#0078d4" /><text x="43" y="28" fontSize="15" fill="#fff" fontFamily={tf}>1</text></g>, 0],
  [<Chrome />, 0],
  [<g stroke="none"><path d="M15 21Q15 20 17 20H27L31 24H50V34H15Z" fill="#d9a21c" /><rect x="15" y="25" width="36" height="28" rx="2" fill="#fbcd4a" /><path d="M21 53V46Q21 42 25 42H41Q45 42 45 46V53Z" fill="#1a72c8" /><rect x="26" y="46.500" width="14" height="2.500" fill="#0d4a94" /></g>, 1],
  [<g stroke="none"><circle cx="33" cy="37" r="17.500" fill="#fff" /><circle cx="33" cy="37" r="16" fill="#0f98d8" /><text x="24" y="48.500" fontSize="31" fontWeight="800" fill="#fff" fontFamily={tf}>?</text><circle cx="47" cy="22.500" r="12" fill="#fdb913" /></g>, 0],
  [<g stroke="none"><path d="M24 27V20H42V27" fill="none" stroke="#35b8f0" strokeWidth="2.500" /><rect x="15.500" y="25" width="35" height="29" rx="3" fill="#174f86" /><path d="M25 31H32V38H25Z" fill="#f25022" /><path d="M33.500 31H41V38H33.500Z" fill="#7fba00" /><path d="M25 39.500H32V46.500H25Z" fill="#00a4ef" /><path d="M33.500 39.500H41V46.500H33.500Z" fill="#ffb900" /></g>, 0],
  [<g stroke="none"><path d="M43 18.500 51 22V50.500L43 54.500 16 31.500 20 27.500 43 45.500Z" fill="#1c84cc" /><path d="M43 18.500 16 41 20 45.500 43 28Z" fill="#0f6fb8" /><path d="M42 18.500 51 22V50.500L42 54.500Z" fill="#2aa0f0" /></g>, 1],
  [<><Chrome /><circle cx="47" cy="22.500" r="12" fill="#e8710a" stroke="none" /><text x="42.500" y="27.500" fontSize="13.500" fill="#fff" stroke="none" fontFamily={tf}>A</text></>, 1],
  [<g stroke="none"><circle cx="34" cy="36.500" r="17" fill="#d35230" /><path d="M34 19.500A17 17 0 0 1 51 36.500H34Z" fill="#ff8f6b" /><path d="M34 19.500V36.500H17Q17 20 34 19.500Z" fill="#ed6c47" /><rect x="15.500" y="27" width="17" height="18.500" rx="2" fill="#b7301c" /><text x="19.500" y="41.500" fontSize="13.500" fontWeight="700" fill="#fff" fontFamily={tf}>P</text></g>, 1],
  [<g><rect x="16" y="19.500" width="34" height="34" fill="#fff" stroke="none" /><path d="M33 31V43M27 37H39M33 21.500V27.500M30 24.500H36M33 46.500V52.500M30 49.500H36M24 27V34M20.500 30.500H27.500M42 27V34M38.500 30.500H45.500M24 40V47M20.500 43.500H27.500M42 40V47M38.500 43.500H45.500M18.500 34.500V39.500M16.500 37H21M47.500 34.500V39.500M45 37H49.500" stroke="#3f7196" strokeWidth="1.500" /></g>, 1],
  [<><path d="M17 53 19.500 44.500A16.200 16.200 0 1 1 26 50.500Z" stroke="#1e8a58" strokeWidth="3.200" fill="#dff0ec" /><path d="M27 28Q24 31 26 35Q30 43 37 45Q41 45 42 41L37.500 38 35 40.500Q31 38.500 30 35L32 33 29.500 28Z" fill="#1e8a58" stroke="none" /><circle cx="46" cy="22.500" r="12.500" fill="#0078d4" stroke="none" /><text x="37.500" y="27.500" fontSize="14" fill="#fff" stroke="none" fontFamily={tf} textLength="16">11</text></>, 1],
  [<g stroke="none"><rect x="5" y="8" width="56" height="57" rx="5" fill="#e6f3f5" /><path d="M15 19H51V54H15Z" fill="#0f6fc0" /><rect x="34" y="19" width="17" height="35" fill="#d9a012" /><rect x="46" y="19" width="5" height="35" fill="#b87e0c" /><rect x="26" y="27" width="17" height="27" fill="#eec02c" /><rect x="19" y="37" width="14" height="17" fill="#fbe06a" /></g>, 2],
];

function Taskbar() {
  return (
    <div className="flex h-[72px] border-t-[2px] border-[#a9b5b8] bg-[linear-gradient(90deg,#d9d9db_0%,#d9dbdd_20%,#cde5ea_30%,#cde5ea_44%,#d9dfe4_51%,#e5dcdd_56%,#d2e3e9_62%,#cfe4ea_78%,#cbebec_87%,#d8e9df_95%,#e4e8d9_100%)] text-[#1b1b1b]">
      <Ic b={[0, 1010, 290, 70]}>
        <rect x="30" y="1027" width="36" height="33" rx="2" fill="#1360a8" stroke="none" />
        <rect x="33.500" y="1030" width="12.500" height="27" rx="1.500" fill="#f4f4f4" stroke="none" />
        <path d="M50 1030H64V1044H50Z" fill="#62d4fa" stroke="none" />
        <path d="M50 1046H64V1057H50Z" fill="#1488e8" stroke="none" />
      </Ic>
      {apps.map(([n, dot], i) => (
        <Ic key={i} b={[0, 2, 66, 70]} className={i === 1 ? "ml-[2px]" : ""}>
          {n}
          {dot === 1 && <rect x="29" y="60" width="8" height="4.500" rx="2.200" fill="#7b7f82" stroke="none" />}
          {dot === 2 && <rect x="21" y="60" width="24" height="4.500" rx="2.200" fill="#1672c8" stroke="none" />}
        </Ic>
      ))}
      <Ic b={[1282, 1010, 247, 70]}>
        <path d="M1386.500 1048 1393 1041 1400 1048" stroke="#1b1b1b" strokeWidth="1.800" />
        <path d="M1434 1052Q1429 1051 1430 1045Q1431 1042 1434 1041Q1437 1035 1443 1037Q1447 1038 1448 1042Q1453 1044 1453 1048T1448 1052Z" fill="#8a8d8f" stroke="#1b1b1b" />
        <path d="M1432 1051 1441 1044 1452 1050 1448 1051.500Z" fill="#f2f2f2" stroke="none" />
        <path d="M1478 1041Q1482 1033 1490 1033.500Q1496 1034 1499 1040M1500 1034V1040.500H1493M1478 1056V1049H1485M1479 1050Q1481 1055 1487 1056" stroke="#444" strokeWidth="2" />
        <circle cx="1495" cy="1050.500" r="6" fill="#f5981e" stroke="none" />
      </Ic>
      <div className="flex w-[34px] shrink-0 flex-col items-center pt-[12px] text-[17px] leading-[23px]"><Fit w={34}>ENG</Fit><Fit w={17}>IN</Fit></div>
      <Ic b={[1563, 1010, 142, 70]}>
        <g stroke="#1b1b1b" strokeWidth="1.700">
          <path d="M1592 1042Q1603 1030 1615 1042M1595.500 1045.500Q1603 1037 1611.500 1045.500M1599 1048.500Q1603 1044 1608 1048.500" />
          <circle cx="1603.500" cy="1050.500" r="1.300" fill="#1b1b1b" />
          <path d="M1627 1041H1631L1637 1036V1052L1631 1047.500H1627ZM1641 1040.500 1649 1048.500M1649 1040.500 1641 1048.500" />
          <rect x="1665" y="1039" width="19" height="12" rx="2" />
          <rect x="1668" y="1041.500" width="13" height="7" fill="#1b1b1b" stroke="none" />
          <path d="M1686.500 1043V1047" strokeWidth="2" />
          <path d="M1667 1032 1663 1039H1666L1665 1044 1671 1036H1667.500L1669 1032Z" fill="#1b1b1b" strokeWidth=".5" />
        </g>
      </Ic>
      <div className="flex w-[90px] shrink-0 flex-col items-end pt-[10px] text-[17px] leading-[24px]"><Fit w={65}>7:02 PM</Fit><Fit w={83}>4/25/2024</Fit></div>
      <Ic b={[1795, 1010, 125, 70]}>
        <path d="M1809 1051V1049L1811 1046V1042Q1811 1034 1818 1034T1825 1042V1046L1827 1049V1051ZM1814 1053H1821Q1820 1056 1817.500 1056T1814 1053Z" fill="#1b1b1b" stroke="none" />
        <path d="M1814.500 1041H1820L1814.500 1047H1820" stroke="#fff" strokeWidth="1.400" />
        <path d="M1823 1034H1828L1823 1039.500H1828" stroke="#1b1b1b" strokeWidth="1.400" />
        <g stroke="none">
          <path d="M1864 1028H1876Q1881 1028 1883 1036H1876Q1873 1036 1872 1040L1868 1052H1861Q1854 1051 1856 1043L1859 1032Q1860 1028 1864 1028Z" fill="#2f7fe0" />
          <path d="M1857.500 1038Q1865 1035 1871 1042L1868 1052H1861Q1854 1051 1856 1043Z" fill="#45b86c" />
          <path d="M1878 1036H1885Q1892 1037 1890 1045L1887 1054Q1886 1059 1881 1059H1868L1873 1042Q1874 1036 1878 1036Z" fill="#c05fd8" />
          <path d="M1871 1047Q1877 1044 1888 1050L1886 1056H1868Z" fill="#f58a6c" />
          <rect x="1863.500" y="1050" width="26.500" height="12" rx="3" fill="#fdc12d" />
          <text x="1866.500" y="1060" fontSize="10" fontWeight="700" fill="#1b1b1b" textLength="20.500" fontFamily={tf}>PRE</text>
        </g>
      </Ic>
    </div>
  );
}

export default function App() {
  return (
    <div className="flex h-[1080px] w-[1920px] flex-col overflow-hidden bg-[#f2f1f0] font-['Open_Sans','Noto_Sans',sans-serif]">
      <TitleBar />
      <div className="relative z-10 bg-[#fafafa] shadow-[0_1px_5px_rgba(0,0,0,0.28)]">
        <RibbonTabs />
        <Ribbon />
      </div>
      <div className="flex h-[732px] shrink-0">
        <Rail />
        <div className="flex w-[1317px] shrink-0 flex-col">
          <div className="flex">
            <Canvas />
            <div className="flex w-[49px] flex-col items-center border-l border-[#a19f9d] bg-white pt-[19px]">
              <DblChev left />
              <Ic b={[1345, 279, 26, 50]} className="ml-[5px]">
                <path d="M1365 303V319.500L1356 314H1349.500V308.500H1356Z" stroke="#252423" />
              </Ic>
              <div className="mt-[4px] text-[21px] font-semibold leading-6 tracking-[0.3px] text-[#252423] [writing-mode:vertical-rl]">Filters</div>
            </div>
          </div>
          <PageTabs />
        </div>
        <Visualizations />
        <DataPane />
      </div>
      <div className="flex h-[35px] shrink-0 border-t border-[#d8d6d4] text-[17px] leading-6 text-[#484644]">
        <Fit w={98} className="ml-[6px] mt-[7px]">Page 2 of 10</Fit>
        <Ic b={[1596, 973, 210, 34]} className="ml-auto">
          <g stroke="#555">
            <path d="M1603 991.500H1609M1775 990.500H1785M1780 985.500V995.500" strokeWidth="2.200" />
            <path d="M1616 990.500H1766" strokeWidth="1.200" />
            <path d="M1691 987V994" strokeWidth="2" />
            <rect x="1656" y="982" width="5.500" height="17" fill="#555" stroke="none" />
          </g>
        </Ic>
        <Fit w={34} className="mt-[5px]">62%</Fit>
        <Ic b={[1840, 973, 80, 34]}>
          <rect x="1870" y="983" width="22" height="16" stroke="#605e5c" />
          <path d="M1873 989V986H1877M1885 986H1889V989M1889 993V996H1885M1877 996H1873V993" stroke="#605e5c" strokeWidth="1.300" />
        </Ic>
      </div>
      <div className="h-px shrink-0 bg-black" />
      <Taskbar />
    </div>
  );
}
